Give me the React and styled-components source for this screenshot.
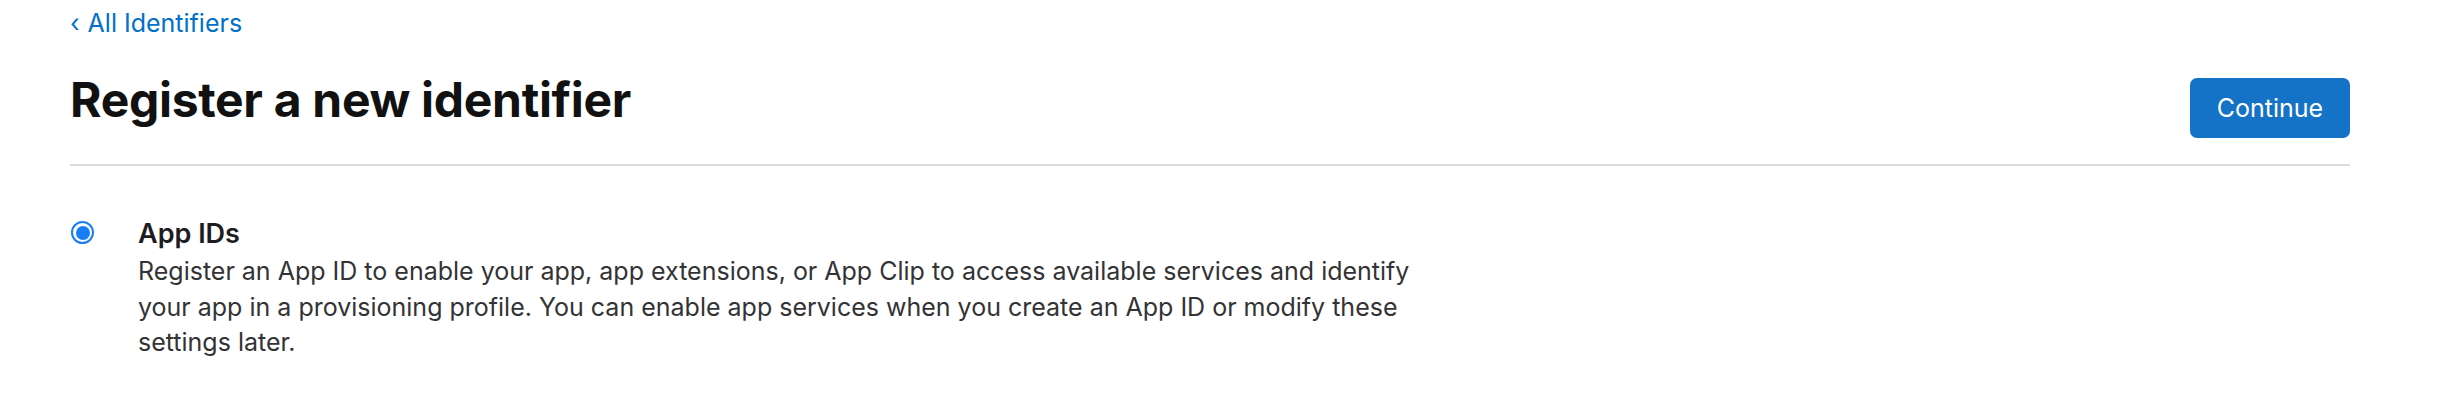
import React, { useState } from 'react';
import styled, { createGlobalStyle } from 'styled-components';

const GlobalStyle = createGlobalStyle`
  html, body {
    margin: 0;
    padding: 0;
    background: #ffffff;
  }
  body {
    font-family: Inter, 'Noto Sans', 'Liberation Sans', sans-serif;
    color: #1d1d1f;
    -webkit-font-smoothing: antialiased;
  }
`;

const Page = styled.main`
  padding: 0 102px 0 70px;
`;

const BackLink = styled.a`
  display: inline-flex;
  align-items: center;
  gap: 8px;
  height: 46px;
  font-size: 25px;
  color: #0070c9;
  text-decoration: none;
  cursor: pointer;
`;

const Header = styled.header`
  display: flex;
  align-items: flex-start;
  justify-content: space-between;
  padding: 32px 0 26px;
  border-bottom: 2px solid #dcdcdc;
`;

const Title = styled.h1`
  margin: 0;
  font-size: 48px;
  line-height: 44px;
  font-weight: 700;
  letter-spacing: -0.3px;
  color: #111111;
`;

const Button = styled.button`
  width: 160px;
  height: 60px;
  border: none;
  border-radius: 7px;
  background: #1473c7;
  color: #ffffff;
  font-family: inherit;
  font-size: 25px;
  cursor: pointer;
`;

const Options = styled.section`
  padding-top: 52px;
`;

const Option = styled.label`
  display: grid;
  grid-template-columns: 68px 1fr;
  align-items: start;
  cursor: pointer;
`;

const Radio = styled.span`
  width: 23px;
  height: 23px;
  box-sizing: border-box;
  margin: 3px 0 0 1px;
  border-radius: 50%;
  border: 2.5px solid ${(p) => (p.checked ? '#177ef5' : '#b0b0b5')};
  display: flex;
  align-items: center;
  justify-content: center;
  &::after {
    content: '';
    width: 14px;
    height: 14px;
    border-radius: 50%;
    background: ${(p) => (p.checked ? '#177ef5' : 'transparent')};
  }
`;

const OptionTitle = styled.div`
  font-size: 27px;
  font-weight: 600;
  line-height: 32px;
  margin-bottom: 4px;
  color: #1d1d1f;
`;

const OptionText = styled.p`
  margin: 0;
  max-width: 1300px;
  font-size: 25px;
  line-height: 35.5px;
  color: #333336;
`;

export default function App() {
  const [selected, setSelected] = useState('app-ids');

  return (
    <>
      <GlobalStyle />
      <Page>
        <BackLink>
          <span>‹</span>
          <span>All Identifiers</span>
        </BackLink>
        <Header>
          <Title>Register a new identifier</Title>
          <Button>Continue</Button>
        </Header>
        <Options>
          <Option onClick={() => setSelected('app-ids')}>
            <Radio checked={selected === 'app-ids'} />
            <div>
              <OptionTitle>App IDs</OptionTitle>
              <OptionText>
                Register an App ID to enable your app, app extensions, or App Clip to access
                available services and identify your app in a provisioning profile. You can
                enable app services when you create an App ID or modify these settings later.
              </OptionText>
            </div>
          </Option>
        </Options>
      </Page>
    </>
  );
}
